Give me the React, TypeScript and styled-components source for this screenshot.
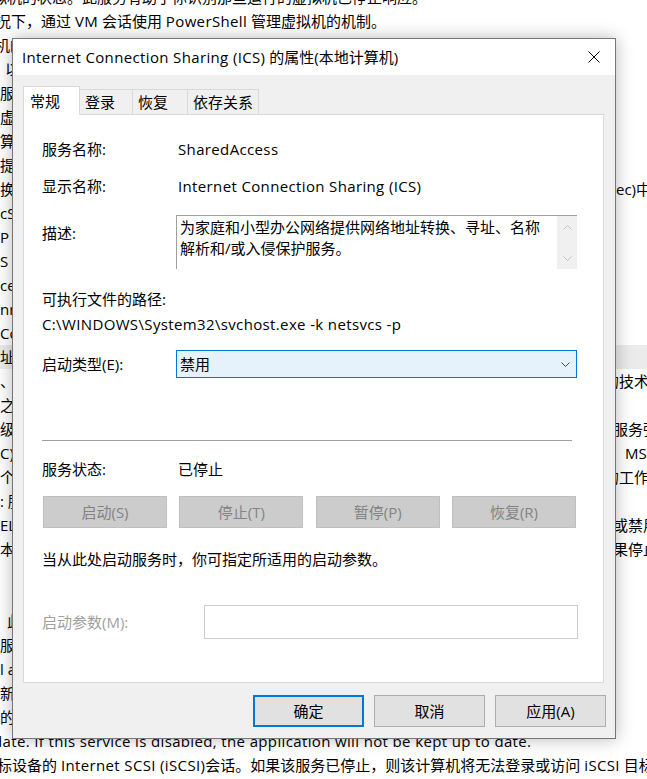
import React from 'react';
import styled, { createGlobalStyle } from 'styled-components';

const FONT = `"Open Sans", "Noto Sans CJK SC", sans-serif`;

const Global = createGlobalStyle`
  html, body { margin: 0; padding: 0; background: #fff; }
  body { width: 647px; height: 779px; overflow: hidden; font-family: ${FONT}; }
`;

const Screen = styled.div`
  position: relative;
  width: 647px;
  height: 779px;
  overflow: hidden;
  background: #fff;
  font-family: ${FONT};
`;

/* Latin runs are set a touch wider, as in the reference UI font */
const Latin = styled.span`
  letter-spacing: 0.36px;
`;

/* ---------- background document ---------- */
const Doc = styled.div`
  margin-top: -15px;
  font-size: 15px;
  line-height: 24px;
  color: #000;
  white-space: nowrap;
`;

const DocRow = styled.div<{ $hl?: boolean }>`
  height: 24px;
  display: grid;
  grid-template-columns: 616px 1fr;
  background: ${p => (p.$hl ? '#ebebeb' : 'transparent')};
`;

const DocLeft = styled.span<{ $shift?: number }>`
  display: block;
  min-width: 0;
  overflow: hidden;
  padding-left: ${p => Math.max(0, p.$shift ?? 0)}px;
  margin-left: ${p => Math.min(0, p.$shift ?? 0)}px;
`;

const DocRight = styled.span<{ $shift?: number }>`
  display: block;
  margin-left: ${p => p.$shift ?? 0}px;
`;

const DocFull = styled.div<{ $shift?: number }>`
  height: 24px;
  margin-left: ${p => p.$shift ?? 0}px;
`;

type DocLine = { full?: React.ReactNode; fs?: number; l?: string; ls?: number; r?: string; rs?: number; hl?: boolean };

const docLines: DocLine[] = [
  { full: '拟机的状态。此服务有助于你识别那些运行的虚拟机已停止响应。', fs: -8 },
  {
    full: (
      <>
        况下，通过 <Latin>VM</Latin> 会话使用 <Latin>PowerShell</Latin> 管理虚拟机的机制。
      </>
    ),
    fs: -4,
  },
  { l: '机的虚拟机', ls: -5 },
  { l: '以', ls: 5 },
  { l: '服务' },
  { l: '虚拟' },
  { l: '算机' },
  { l: '提供' },
  { l: '换(IKE)', r: 'ec)中' },
  { l: 'cSI' },
  { l: 'P' },
  { l: ' S' },
  { l: 'ce' },
  { l: 'nn' },
  { l: 'Co' },
  { l: '址转', hl: true },
  { l: '、', r: '的技术', rs: -12 },
  { l: '之' },
  { l: '级别', r: '服务强', rs: -3 },
  { l: 'C)', r: 'MS', rs: 9 },
  { l: '个(', r: '的工作', rs: -12 },
  { l: ': 服' },
  { l: 'EL', r: '或禁用', rs: -3 },
  { l: '本', r: '果停止', rs: -3 },
  {},
  {},
  { l: '此', ls: 7 },
  { l: '服务' },
  { l: 'l a' },
  { l: '新' },
  { l: '的' },
  {
    full: <Latin>date. If this service is disabled, the application will not be kept up to date.</Latin>,
    fs: -7,
  },
  {
    full: (
      <>
        标设备的 <Latin>Internet SCSI (iSCSI)</Latin>会话。如果该服务已停止，则该计算机将无法登录或访问 <Latin>iSCSI</Latin> 目标设备。
      </>
    ),
    fs: -3,
  },
];

/* ---------- dialog ---------- */
const Dialog = styled.div`
  position: absolute;
  left: 12px;
  top: 38px;
  width: 604px;
  height: 701px;
  box-sizing: border-box;
  border: 1px solid #777;
  background: #f0f0f0;
  box-shadow: 0 0 16px rgba(0, 0, 0, 0.28);
  display: flex;
  flex-direction: column;
  font-size: 15px;
  color: #000;
`;

const TitleBar = styled.div`
  height: 36px;
  flex-shrink: 0;
  background: #fff;
  display: flex;
  align-items: center;
  padding-left: 9px;
`;

const Title = styled.div`
  flex: 1;
  line-height: 20px;
  white-space: nowrap;
`;

const CloseButton = styled.div`
  width: 42px;
  height: 36px;
  display: flex;
  align-items: center;
  justify-content: center;
`;

const Body = styled.div`
  padding: 11px 11px 0 10px;
  display: flex;
  flex-direction: column;
`;

const TabStrip = styled.div`
  height: 28px;
  display: flex;
  align-items: flex-end;
  position: relative;
  z-index: 1;
`;

const Tab = styled.div<{ $active?: boolean; $w: number }>`
  box-sizing: border-box;
  width: ${p => p.$w}px;
  height: ${p => (p.$active ? 29 : 25)}px;
  margin-bottom: ${p => (p.$active ? -1 : 0)}px;
  margin-left: ${p => (p.$active ? 0 : -1)}px;
  padding-left: ${p => (p.$active ? 6 : 5)}px;
  border: 1px solid #d9d9d9;
  border-bottom: none;
  background: ${p => (p.$active ? '#fff' : '#f0f0f0')};
  display: flex;
  align-items: center;
  line-height: 20px;
  white-space: nowrap;
  &:first-child { margin-left: 0; }
`;

const Panel = styled.div`
  box-sizing: border-box;
  height: 569px;
  background: #fff;
  border: 1px solid #d9d9d9;
  padding: 24px 24px 0 18px;
  display: flex;
  flex-direction: column;
`;

const FieldRow = styled.div<{ $mt: number; $top?: boolean }>`
  display: flex;
  align-items: ${p => (p.$top ? 'flex-start' : 'center')};
  margin-top: ${p => p.$mt}px;
`;

const Label = styled.div<{ $w?: number; $mt?: number; $disabled?: boolean }>`
  width: ${p => p.$w ?? 135}px;
  flex-shrink: 0;
  line-height: 20px;
  margin-top: ${p => p.$mt ?? 0}px;
  color: ${p => (p.$disabled ? '#a0a0a0' : '#000')};
  white-space: nowrap;
`;

const Value = styled.div`
  line-height: 20px;
  padding-left: 1px;
  white-space: nowrap;
`;

const TextLine = styled.div<{ $mt: number }>`
  line-height: 20px;
  margin-top: ${p => p.$mt}px;
  white-space: nowrap;
`;

const DescBox = styled.div`
  width: 401px;
  height: 54px;
  box-sizing: border-box;
  border-top: 1px solid #a0a0a0;
  border-left: 1px solid #a0a0a0;
  display: flex;
  overflow: hidden;
`;

const DescText = styled.div`
  flex: 1;
  padding: 1px 3px;
  line-height: 21px;
  white-space: nowrap;
`;

const ScrollTrack = styled.div`
  width: 20px;
  background: #f0f0f0;
  display: flex;
  flex-direction: column;
  justify-content: space-between;
`;

const ScrollArrow = styled.div`
  height: 22px;
  display: flex;
  align-items: center;
  justify-content: center;
`;

const Dropdown = styled.div`
  width: 401px;
  height: 28px;
  box-sizing: border-box;
  border: 1px solid #0078d7;
  background: #e5f1fb;
  display: flex;
  align-items: center;
  justify-content: space-between;
  padding: 0 6px 0 3px;
  line-height: 20px;
`;

const Separator = styled.div`
  width: 530px;
  height: 1px;
  background: #a0a0a0;
  margin-top: 62px;
`;

const ServiceButtons = styled.div`
  margin-top: 17px;
  width: 533px;
  padding-left: 1px;
  display: flex;
  justify-content: space-between;
`;

const ServiceButton = styled.div`
  width: 124px;
  height: 32px;
  box-sizing: border-box;
  background: #cccccc;
  border: 1px solid #bfbfbf;
  color: #838383;
  display: flex;
  align-items: center;
  justify-content: center;
  line-height: 20px;
`;

const ParamInput = styled.div`
  width: 374px;
  height: 34px;
  box-sizing: border-box;
  border: 1px solid #cccccc;
  background: #fff;
`;

const Footer = styled.div`
  display: flex;
  justify-content: flex-end;
  gap: 10px;
  padding: 12px 9px 0 0;
`;

const DialogButton = styled.div<{ $default?: boolean }>`
  width: 111px;
  height: 32px;
  box-sizing: border-box;
  background: #e1e1e1;
  border: ${p => (p.$default ? '2px solid #0078d7' : '1px solid #adadad')};
  display: flex;
  align-items: center;
  justify-content: center;
  line-height: 20px;
`;

const Chevron = ({ up, color }: { up?: boolean; color: string }) => (
  <svg width="9" height="5" viewBox="0 0 9 5">
    <path
      d={up ? 'M0.5 4.5 L4.5 0.5 L8.5 4.5' : 'M0.5 0.5 L4.5 4.5 L8.5 0.5'}
      fill="none"
      stroke={color}
      strokeWidth="1"
    />
  </svg>
);

export default function App() {
  return (
    <Screen>
      <Global />
      <Doc>
        {docLines.map((d, i) =>
          d.full !== undefined ? (
            <DocFull key={i} $shift={d.fs}>{d.full}</DocFull>
          ) : (
            <DocRow key={i} $hl={d.hl}>
              <DocLeft $shift={d.ls}>{d.l ?? ''}</DocLeft>
              <DocRight $shift={d.rs}>{d.r ?? ''}</DocRight>
            </DocRow>
          )
        )}
      </Doc>

      <Dialog>
        <TitleBar>
          <Title>
            <Latin>Internet Connection Sharing (ICS)</Latin> 的属性(本地计算机)
          </Title>
          <CloseButton>
            <svg width="12" height="12" viewBox="0 0 12 12">
              <path d="M0.5 0.5 L11.5 11.5 M11.5 0.5 L0.5 11.5" stroke="#000" strokeWidth="1" fill="none" />
            </svg>
          </CloseButton>
        </TitleBar>
        <Body>
          <TabStrip>
            <Tab $active $w={57}>常规</Tab>
            <Tab $w={54}>登录</Tab>
            <Tab $w={56}>恢复</Tab>
            <Tab $w={72}>依存关系</Tab>
          </TabStrip>
          <Panel>
            <FieldRow $mt={0}>
              <Label>服务名称:</Label>
              <Value><Latin>SharedAccess</Latin></Value>
            </FieldRow>
            <FieldRow $mt={17}>
              <Label>显示名称:</Label>
              <Value><Latin>Internet Connection Sharing (ICS)</Latin></Value>
            </FieldRow>
            <FieldRow $mt={19} $top>
              <Label $mt={8} $w={134}>描述:</Label>
              <DescBox>
                <DescText>
                  <div>为家庭和小型办公网络提供网络地址转换、寻址、名称</div>
                  <div>解析和/或入侵保护服务。</div>
                </DescText>
                <ScrollTrack>
                  <ScrollArrow><Chevron up color="#c2c2c2" /></ScrollArrow>
                  <ScrollArrow><Chevron color="#c2c2c2" /></ScrollArrow>
                </ScrollTrack>
              </DescBox>
            </FieldRow>
            <TextLine $mt={20}>可执行文件的路径:</TextLine>
            <TextLine $mt={5}><Latin>C:\WINDOWS\System32\svchost.exe -k netsvcs -p</Latin></TextLine>
            <FieldRow $mt={16}>
              <Label $w={134}>启动类型(E):</Label>
              <Dropdown>
                <span>禁用</span>
                <Chevron color="#444" />
              </Dropdown>
            </FieldRow>
            <Separator />
            <FieldRow $mt={18}>
              <Label>服务状态:</Label>
              <Value>已停止</Value>
            </FieldRow>
            <ServiceButtons>
              <ServiceButton>启动(S)</ServiceButton>
              <ServiceButton>停止(T)</ServiceButton>
              <ServiceButton>暂停(P)</ServiceButton>
              <ServiceButton>恢复(R)</ServiceButton>
            </ServiceButtons>
            <TextLine $mt={21}>当从此处启动服务时，你可指定所适用的启动参数。</TextLine>
            <FieldRow $mt={36}>
              <Label $w={162} $disabled>启动参数(M):</Label>
              <ParamInput />
            </FieldRow>
          </Panel>
        </Body>
        <Footer>
          <DialogButton $default>确定</DialogButton>
          <DialogButton>取消</DialogButton>
          <DialogButton>应用(A)</DialogButton>
        </Footer>
      </Dialog>
    </Screen>
  );
}
